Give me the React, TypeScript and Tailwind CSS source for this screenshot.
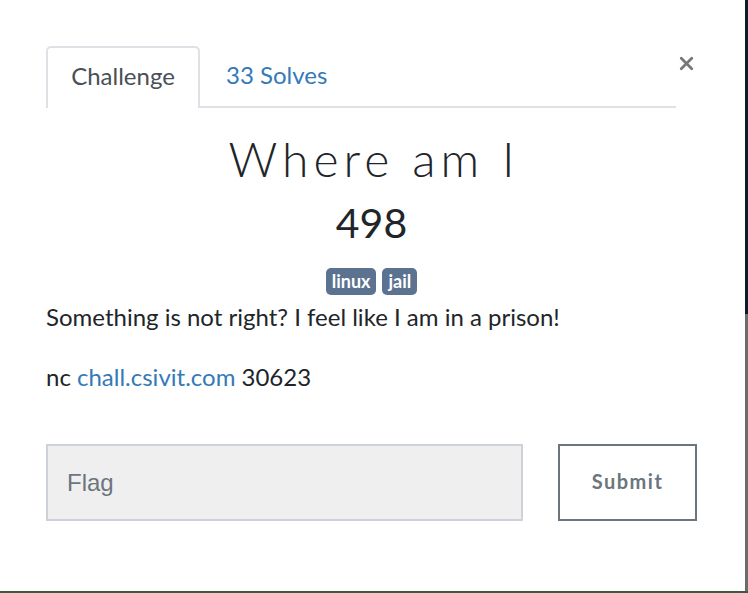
import { X } from "lucide-react";

const tags = ["linux", "jail"];

export default function App() {
  return (
    <div className="w-[748px] h-[593px] flex flex-col bg-white" style={{ fontFamily: "Lato, 'Liberation Sans', sans-serif" }}>
      <div className="flex flex-1">
        <div className="flex-1 bg-white pl-[46px] pr-[48px] pt-[46px] flex flex-col">
          {/* tabs */}
          <div className="flex items-start">
            <div className="flex w-[630px] border-b-2 border-[#dee2e6] h-[62px]">
              <div className="w-[154px] h-[62px] -mb-[2px] border-2 border-b-0 border-[#dee2e6] rounded-t-[5px] bg-white flex items-center justify-center pb-[5px] text-[24px] text-[#495057]">
                Challenge
              </div>
              <div className="pl-[26px] flex items-center pb-[2px] text-[24px] text-[#337ab7]">33 Solves</div>
            </div>
            <button className="ml-auto mt-[7px] text-[#777]">
              <X size={21} strokeWidth={3.2} />
            </button>
          </div>

          {/* title */}
          <div className="text-center text-[#212529]">
            <div className="mt-[23px] text-[48px] font-light tracking-[5px] leading-[56px] pl-[5px]">Where am I</div>
            <div className="mt-[10px] text-[41px] leading-[52px]">498</div>
          </div>

          <div className="flex justify-center gap-[6px] mt-[19px]">
            {tags.map((t) => (
              <span key={t} className="bg-[#5b7290] text-white font-bold text-[18px] h-[27px] flex items-center px-[6px] rounded-[5px]">
                {t}
              </span>
            ))}
          </div>

          <p className="mt-[6px] text-[24px] text-[#212529] leading-[32px]">
            Something is not right? I feel like I am in a prison!
          </p>
          <p className="mt-[28px] text-[24px] text-[#212529] leading-[32px]">
            nc <a className="text-[#337ab7]">chall.csivit.com</a> 30623
          </p>

          <div className="flex mt-[51px] items-start">
            <input
              placeholder="Flag"
              className="w-[477px] h-[77px] bg-[#efefef] border-2 border-[#ccd2d8] px-[19px] text-[24px] placeholder:text-[#6c757d] outline-none"
              style={{ fontFamily: "'Liberation Sans', Arial, sans-serif" }}
            />
            <button className="ml-auto w-[139px] h-[77px] pb-[4px] border-2 border-[#6c757d] text-[#6c757d] text-[20px] font-bold tracking-[1.5px]">
              Submit
            </button>
          </div>
        </div>
        <div className="w-[3px] flex flex-col">
          <div className="h-[314px] bg-[#0b1a2e]" />
          <div className="flex-1 bg-[#6b6b6b]" />
        </div>
      </div>
      <div className="h-[2px] bg-[#3d5a3d]" />
    </div>
  );
}
